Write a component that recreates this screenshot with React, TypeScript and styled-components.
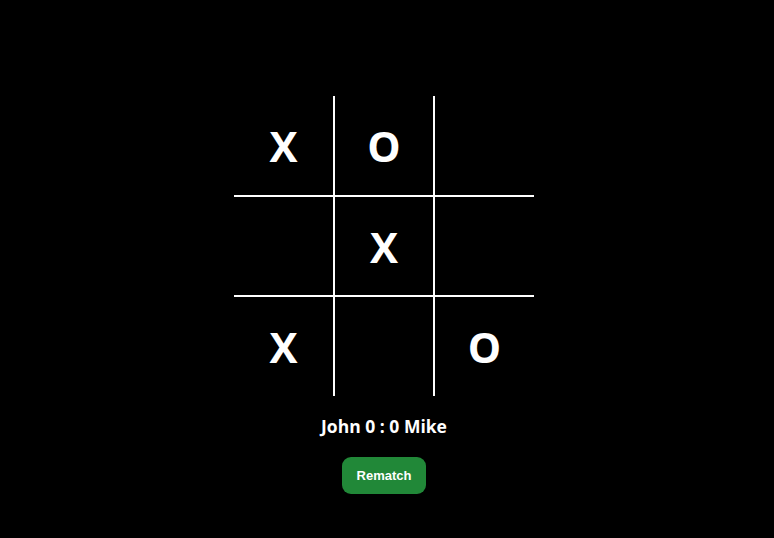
import React from "react";
import styled, { createGlobalStyle } from "styled-components";

const GlobalStyle = createGlobalStyle`
  html, body {
    margin: 0;
    padding: 0;
    background: #000;
  }
`;

type Mark = "X" | "O" | "";

const board: Mark[] = ["X", "O", "", "", "X", "", "X", "", "O"];

const App: React.FC = () => {
  return (
    <>
      <GlobalStyle />
      <Page>
        <Board>
          {board.map((m, i) => (
            <Cell
              key={i}
              $col={i % 3}
              $row={Math.floor(i / 3)}
            >
              {m}
            </Cell>
          ))}
        </Board>
        <Score>John 0 : 0 Mike</Score>
        <RematchButton>Rematch</RematchButton>
      </Page>
    </>
  );
};

const Page = styled.div`
  width: 768px;
  height: 538px;
  box-sizing: border-box;
  padding-top: 96px;
  display: flex;
  flex-direction: column;
  align-items: center;
  background: #000;
`;

const Board = styled.div`
  display: grid;
  grid-template-columns: repeat(3, 100px);
  grid-template-rows: repeat(3, 100px);
`;

// each inner line is 1px on either side of the shared edge
const Cell = styled.div<{ $col: number; $row: number }>`
  box-sizing: border-box;
  display: flex;
  align-items: center;
  justify-content: center;
  color: #fff;
  font-family: "Open Sans", "DejaVu Sans", sans-serif;
  font-weight: 700;
  font-size: 42px;
  border-left: ${(p) => (p.$col > 0 ? "1px solid #fff" : "none")};
  border-right: ${(p) => (p.$col < 2 ? "1px solid #fff" : "none")};
  border-top: ${(p) => (p.$row > 0 ? "1px solid #fff" : "none")};
  border-bottom: ${(p) => (p.$row < 2 ? "1px solid #fff" : "none")};
`;

const Score = styled.div`
  margin-top: 16px;
  color: #fff;
  font-family: "Open Sans", "DejaVu Sans", sans-serif;
  font-weight: 700;
  font-size: 17.5px;
  line-height: 28px;
`;

const RematchButton = styled.button`
  margin-top: 17px;
  height: 37px;
  padding: 0 15px;
  border: none;
  border-radius: 9px;
  background: #218838;
  color: #fff;
  font-family: "Liberation Sans", Arial, sans-serif;
  font-weight: 700;
  font-size: 13px;
  cursor: pointer;
`;

export default App;
